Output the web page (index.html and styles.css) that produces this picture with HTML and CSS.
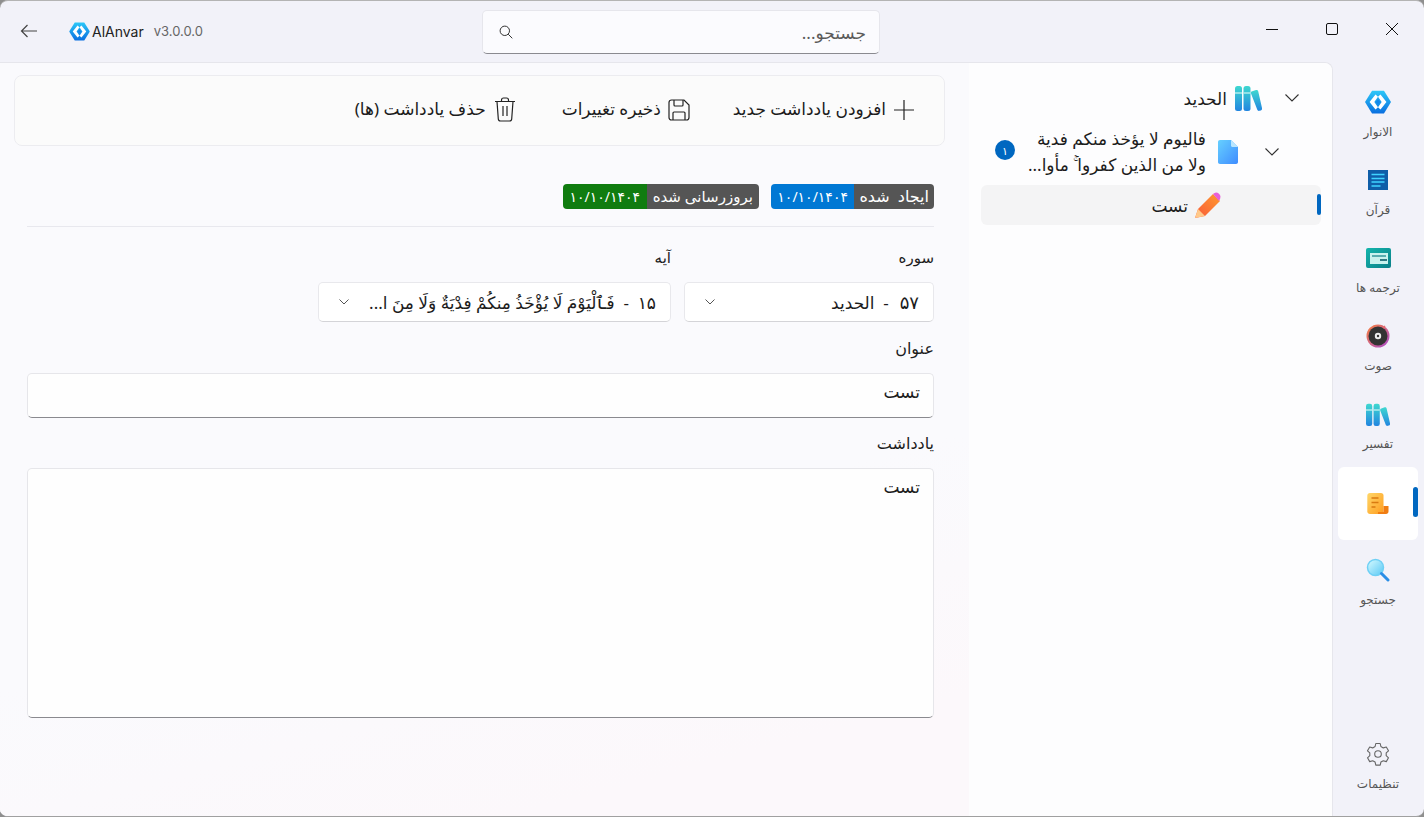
FILE: index.html
```html
<!DOCTYPE html>
<html lang="fa">
<head>
<meta charset="utf-8">
<title>AlAnvar</title>
<link rel="stylesheet" href="styles.css">
</head>
<body>
<svg class="defs" width="0" height="0" aria-hidden="true">
  <defs>
    <linearGradient id="gLogo" x1="0" y1="0" x2="0" y2="1"><stop offset="0" stop-color="#2cc8f8"/><stop offset="1" stop-color="#0a6fe0"/></linearGradient>
    <linearGradient id="gBook" x1="0" y1="0" x2="0" y2="1"><stop offset="0" stop-color="#3fd8d0"/><stop offset="1" stop-color="#2285e0"/></linearGradient>
    <linearGradient id="gDoc" x1="0" y1="0" x2="1" y2="1"><stop offset="0" stop-color="#66d0ff"/><stop offset="1" stop-color="#3f8cff"/></linearGradient>
    <linearGradient id="gPen" x1="1" y1="0" x2="0" y2="1"><stop offset="0" stop-color="#ff9a2e"/><stop offset="1" stop-color="#f8583a"/></linearGradient>
    <linearGradient id="gNote" x1="0" y1="0" x2="1" y2="1"><stop offset="0" stop-color="#ffd76a"/><stop offset="1" stop-color="#ff9d1e"/></linearGradient>
    <linearGradient id="gTrans" x1="0" y1="0" x2="1" y2="1"><stop offset="0" stop-color="#14b5ac"/><stop offset="1" stop-color="#0a7f88"/></linearGradient>
    <linearGradient id="gRing" x1="0" y1="0" x2="1" y2="1"><stop offset="0" stop-color="#f9803a"/><stop offset="1" stop-color="#a84ad0"/></linearGradient>
    <linearGradient id="gLens" x1="0" y1="0" x2="1" y2="1"><stop offset="0" stop-color="#d8fbff"/><stop offset="1" stop-color="#58c8f5"/></linearGradient>
    <symbol id="logo" viewBox="0 0 24 22">
      <path d="M6.500 0.500h11L24 11l-6.500 10.500h-11L0 11z" fill="url(#gLogo)"/>
      <path d="M9.700 4L4.200 11l5.500 7 2.300-2.200L8.600 11l3.400-4.800zM14.300 4l5.500 7-5.500 7-2.300-2.200 3.400-4.800L12 6.200z" fill="#fff"/>
      <path d="M12 8.200L14 11l-2 2.800L10 11z" fill="#1488ea"/>
    </symbol>
    <symbol id="books" viewBox="0 0 27 25">
      <rect x="0" y="0" width="7" height="25" rx="2.500" fill="url(#gBook)"/>
      <rect x="8.500" y="0" width="7" height="25" rx="2.500" fill="url(#gBook)"/>
      <path d="M16.500 5.500l4.500-1.500c1-.3 1.900.2 2.200 1.200L27 22c.3 1.100-.2 2-1.200 2.400l-1.300.4c-1 .3-2-.2-2.300-1.200L16 7.500c-.2-.8 0-1.700.5-2z" fill="url(#gBook)"/>
      <path d="M0 6h7v2H0zM8.500 6H15.500v2H8.500z" fill="#b6f0ee" opacity=".7"/>
    </symbol>
  </defs>
</svg>
<div class="window">
  <header class="titlebar">
    <div class="brand">
      <svg class="back" width="18" height="14" viewBox="0 0 18 14"><path d="M17 7H1.500M7.500 1L1.500 7l6 6" fill="none" stroke="#444" stroke-width="1.200"/></svg>
      <svg class="logo" width="21" height="19" viewBox="0 0 24 22"><use href="#logo"/></svg>
      <span class="appname">AlAnvar</span>
      <span class="version">v3.0.0.0</span>
    </div>
    <div class="search">
      <span class="search-text">جستجو...</span>
      <svg width="14" height="14" viewBox="0 0 14 14"><circle cx="5.800" cy="5.800" r="4.700" fill="none" stroke="#333" stroke-width="1"/><path d="M9.200 9.200L13.300 13.300" stroke="#333" stroke-width="1"/></svg>
    </div>
    <div class="caption">
      <span class="capbtn"><svg width="14" height="14" viewBox="0 0 14 14"><path d="M1 7.500h12" stroke="#111" stroke-width="1"/></svg></span>
      <span class="capbtn"><svg width="14" height="14" viewBox="0 0 14 14"><rect x="1.500" y="1.500" width="11" height="11" rx="1.500" fill="none" stroke="#111" stroke-width="1"/></svg></span>
      <span class="capbtn"><svg width="14" height="14" viewBox="0 0 14 14"><path d="M1 1l12 12M13 1L1 13" stroke="#111" stroke-width="1"/></svg></span>
    </div>
  </header>
  <div class="body">
    <nav class="nav">
      <a class="nav-item">
        <svg width="26" height="24" viewBox="0 0 24 22"><use href="#logo"/></svg>
        <span>الانوار</span>
      </a>
      <a class="nav-item">
        <svg width="24" height="24" viewBox="0 0 24 24"><rect x="2" y="2" width="20" height="20" fill="#0f5ea8"/><path d="M5.500 6.500h13M5.500 10.500h13M5.500 14h13M5.500 18h9" stroke="#3fd4ff" stroke-width="1.700"/></svg>
        <span>قرآن</span>
      </a>
      <a class="nav-item">
        <svg width="25" height="24" viewBox="0 0 25 24"><rect x="0" y="2" width="25" height="20" rx="2" fill="url(#gTrans)"/><rect x="4" y="7" width="18" height="11" fill="#c8f2ee"/><path d="M6 10h14" stroke="#0f7f88" stroke-width="1.200"/><path d="M14 14h7" stroke="#0a5a68" stroke-width="1.600"/></svg>
        <span>ترجمه ها</span>
      </a>
      <a class="nav-item">
        <svg width="24" height="24" viewBox="0 0 24 24"><circle cx="12" cy="12" r="11.500" fill="url(#gRing)"/><circle cx="12" cy="12" r="9.500" fill="#333"/><circle cx="12" cy="12" r="3.200" fill="#eee"/><circle cx="12" cy="12" r="1.200" fill="#333"/><path d="M17 4l2-2" stroke="#e86a6a" stroke-width="1.500"/></svg>
        <span>صوت</span>
      </a>
      <a class="nav-item">
        <svg width="24" height="24" viewBox="0 -1 27 27"><use href="#books"/></svg>
        <span>تفسیر</span>
      </a>
      <a class="nav-item nav-selected">
        <svg width="22" height="22" viewBox="0 0 22 22"><path d="M3 0h11c1.500 0 2.500 1 2.500 2.500V21H3c-1.600 0-2.700-1-2.700-2.700V2.700C.3 1 1.400 0 3 0z" fill="url(#gNote)"/><path d="M16.500 13H21.500v5.500c0 1.500-1 2.500-2.500 2.500h-8v-2h5.500z" fill="#f07d12"/><path d="M4.500 5h7M4.500 9.500h7M4.500 14h4" stroke="#d97a10" stroke-width="1.300"/></svg>
        <i class="marker marker-nav"></i>
      </a>
      <a class="nav-item">
        <svg width="24" height="24" viewBox="0 0 24 24"><circle cx="9.500" cy="9.500" r="8" fill="url(#gLens)" stroke="#6fd0f5" stroke-width="1.500"/><path d="M15.500 15.500L22 22" stroke="#2a8ee6" stroke-width="3" stroke-linecap="round"/></svg>
        <span>جستجو</span>
      </a>
      <a class="nav-item nav-bottom">
        <svg width="24" height="24" viewBox="0 0 24 24"><path d="M9.800 1.500h4.400l.7 3 2.400 1.400 3-.9 2.200 3.800-2.300 2.100v2.800l2.300 2.100-2.200 3.800-3-.9-2.400 1.400-.7 3H9.800l-.7-3-2.400-1.400-3 .9-2.200-3.800 2.300-2.100v-2.800L1.500 8.800 3.700 5l3 .9 2.400-1.400z" fill="none" stroke="#666" stroke-width="1.100" stroke-linejoin="round"/><circle cx="12" cy="12" r="3.300" fill="none" stroke="#666" stroke-width="1.100"/></svg>
        <span>تنظیمات</span>
      </a>
    </nav>
    <div class="panel">
      <aside class="tree">
        <div class="row row-surah">
          <svg class="chev" width="16" height="10" viewBox="0 0 16 10"><path d="M1.500 1.500L8 8l6.500-6.500" fill="none" stroke="#333" stroke-width="1.100"/></svg>
          <svg class="ic-books" width="27" height="25"><use href="#books"/></svg>
          <span class="row-title">الحدید</span>
        </div>
        <div class="row row-ayah">
          <svg class="chev" width="16" height="10" viewBox="0 0 16 10"><path d="M1.500 1.500L8 8l6.500-6.500" fill="none" stroke="#333" stroke-width="1.100"/></svg>
          <svg class="ic-doc" width="20" height="24" viewBox="0 0 20 24"><path d="M2 0h11l7 7v15c0 1.200-.8 2-2 2H2c-1.200 0-2-.8-2-2V2C0 .8.800 0 2 0z" fill="url(#gDoc)"/><path d="M13 0l7 7h-5.500c-.9 0-1.500-.6-1.500-1.500z" fill="#b9e6ff"/></svg>
          <span class="row-ayah-text"><span class="line">فالیوم لا یؤخذ منكم فدیة</span><span class="line">ولا من الذین كفروا ۚ مأوا...</span></span>
          <span class="count">۱</span>
        </div>
        <div class="row row-note">
          <svg class="ic-pen" width="27" height="26" viewBox="0 0 27 26"><path d="M0 26l3-9L18 2l7 7L10 24z" fill="url(#gPen)"/><path d="M0 26l3-9 7 7z" fill="#ffc98a"/><path d="M18 2c2-2 4-2 6-.2s2 4 0 7.200z" fill="#e860d8"/></svg>
          <span class="row-title">تست</span>
          <i class="marker marker-tree"></i>
        </div>
      </aside>
      <main class="main">
        <div class="toolbar">
          <button class="tool"><svg width="22" height="22" viewBox="0 0 22 22"><path d="M11 1v20M1 11h20" stroke="#222" stroke-width="1.200"/></svg><span>افزودن یادداشت جدید</span></button>
          <button class="tool"><svg width="22" height="22" viewBox="0 0 22 22"><path d="M3.500 1H16l5 5v12.500c0 1.500-1 2.500-2.500 2.500h-15C2 21 1 20 1 18.500v-15C1 2 2 1 3.500 1z" fill="none" stroke="#222" stroke-width="1.200"/><path d="M6 1v5c0 .7.400 1 1 1h7c.6 0 1-.3 1-1V1M5 21v-7c0-.7.400-1 1-1h10c.6 0 1 .3 1 1v7" fill="none" stroke="#222" stroke-width="1.200"/></svg><span>ذخیره تغییرات</span></button>
          <button class="tool tool-delete"><svg width="22" height="25" viewBox="0 0 22 25"><path d="M1 4.500h20M3 4.500l1.300 17.500c.1 1.300 1 2 2.200 2h9c1.200 0 2.100-.7 2.200-2L19 4.500M7.500 4.500V3c0-1.200.8-2 2-2h3c1.200 0 2 .8 2 2v1.500M9 9v10M13 9v10" fill="none" stroke="#222" stroke-width="1.200"/></svg><span>حذف یادداشت (ها)</span></button>
        </div>
        <div class="badges">
          <div class="badge"><span class="badge-key key-created">ایجاد شده</span><span class="badge-val val-blue">۱۰/۱۰/۱۴۰۴</span></div>
          <div class="badge"><span class="badge-key key-updated">بروزرسانی شده</span><span class="badge-val val-green">۱۰/۱۰/۱۴۰۴</span></div>
        </div>
        <hr class="divider">
        <div class="pickers">
          <div class="field field-surah">
            <label class="label label-small">سوره</label>
            <div class="combo"><span class="combo-text"><span class="combo-num">۵۷</span>&nbsp; - &nbsp;الحدید</span><svg width="10" height="6" viewBox="0 0 10 6"><path d="M.5.500L5 5 9.500.500" fill="none" stroke="#555" stroke-width="1"/></svg></div>
          </div>
          <div class="field field-ayah">
            <label class="label label-small">آیه</label>
            <div class="combo"><span class="combo-text">۱۵&nbsp; - &nbsp;فَٱلْيَوْمَ لَا يُؤْخَذُ مِنكُمْ فِدْيَةٌ وَلَا مِنَ ا...</span><svg width="10" height="6" viewBox="0 0 10 6"><path d="M.5.500L5 5 9.500.500" fill="none" stroke="#555" stroke-width="1"/></svg></div>
          </div>
        </div>
        <label class="label label-title">عنوان</label>
        <div class="input input-title">تست</div>
        <label class="label label-note">یادداشت</label>
        <div class="input input-note">تست</div>
      </main>
    </div>
  </div>
</div>
</body>
</html>
```
FILE: styles.css
```css
* { box-sizing: border-box; }
html, body { margin: 0; height: 100%; }
body {
  background: #8f8f8f;
  font-family: "Noto Sans", "DejaVu Sans", sans-serif;
  color: #1c1c1c;
  overflow: hidden;
}
.defs { position: absolute; }
.window {
  height: 817px;
  display: flex;
  flex-direction: column;
  background: #f2f2f9;
  border-radius: 8px;
  overflow: hidden;
  border-top: 1px solid #b4b4b4;
  border-bottom: 1px solid #a0a0a0;
}
.titlebar {
  height: 61px;
  flex: none;
  display: grid;
  grid-template-columns: 482px 398px 1fr;
  align-items: start;
}
.brand {
  display: flex;
  align-items: center;
  height: 60px;
  padding-left: 20px;
}
.back { margin-right: 31px; }
.logo { margin-right: 2px; }
.appname { font-family: "Inter", sans-serif; font-size: 14px; margin-right: 10px; color: #222; }
.version { font-family: "Inter", sans-serif; font-size: 13px; color: #666; }
.search {
  direction: rtl;
  height: 44px;
  margin-top: 9px;
  background: #fbfbfe;
  border: 1px solid #e6e6ec;
  border-bottom: 1px solid #8a8a90;
  border-radius: 5px;
  display: flex;
  align-items: center;
  justify-content: space-between;
  padding: 0 13px 0 16px;
  font-size: 17px;
  color: #5a5a5a;
}
.caption {
  display: flex;
  justify-content: flex-end;
  padding-right: 2px;
}
.capbtn {
  width: 60px;
  height: 56px;
  display: flex;
  align-items: center;
  justify-content: center;
}
.body {
  direction: rtl;
  flex: 1;
  display: flex;
  min-height: 0;
}
.nav {
  width: 91px;
  flex: none;
  display: flex;
  flex-direction: column;
  gap: 5px;
  padding: 15px 6px 14px 5px;
  font-size: 12px;
  color: #555;
}
.nav-item {
  position: relative;
  width: 80px;
  height: 73px;
  flex: none;
  display: flex;
  flex-direction: column;
  align-items: center;
  padding-top: 13px;
  gap: 9px;
  border-radius: 6px;
}
.nav-item span { line-height: 18px; }
.nav-selected {
  background: #fff;
  justify-content: center;
  padding-top: 0;
}
.nav-bottom { margin-top: auto; }
.marker {
  position: absolute;
  background: #0067c0;
  border-radius: 3px;
}
.marker-nav { right: 0; top: 20px; width: 5px; height: 30px; }
.marker-tree { right: 0; top: 9px; width: 4px; height: 21px; }
.panel {
  flex: 1;
  display: flex;
  background: #fafafd;
  border-radius: 0 8px 0 0;
  border-top: 1px solid #e6e6ec;
  border-right: 1px solid #e6e6ec;
  min-width: 0;
}
.tree {
  width: 363px;
  flex: none;
  background: #fdfdfe;
  padding: 15px 11px 0 12px;
  display: flex;
  flex-direction: column;
  gap: 8px;
  border-radius: 0 8px 0 0;
}
.row {
  position: relative;
  display: flex;
  align-items: center;
  border-radius: 6px;
}
.row-surah { height: 40px; padding-right: 21px; }
.row-ayah { height: 51px; padding-right: 41px; }
.row-note { height: 40px; padding-right: 99px; background: #f4f4f5; }
.row-title { font-size: 17px; }
.ic-books { margin: 0 22px 0 8px; }
.ic-doc { margin: 0 26px 0 12px; }
.ic-pen { margin-left: 7px; }
.row-ayah-text {
  width: 180px;
  font-size: 17px;
  line-height: 26px;
  white-space: nowrap;
}
.line { display: block; }
.count {
  margin: 0 11px 3px 0;
  width: 20px;
  height: 20px;
  border-radius: 50%;
  background: #0067c0;
  color: #fff;
  font-size: 11px;
  display: flex;
  align-items: center;
  justify-content: center;
}
.main {
  flex: 1;
  min-width: 0;
  padding: 12px 24px 0 14px;
  display: flex;
  flex-direction: column;
  background: linear-gradient(165deg, #fafafd 62%, #fcf8fb 88%);
}
.toolbar {
  height: 71px;
  flex: none;
  background: #fbfbfb;
  border: 1px solid #ececf0;
  border-radius: 8px;
  display: flex;
  align-items: center;
  gap: 43px;
  padding: 0 29px 2px 0;
}
.tool {
  border: 0;
  background: none;
  padding: 0;
  display: flex;
  align-items: center;
  gap: 7px;
  font-family: inherit;
  font-size: 17px;
  color: #1c1c1c;
}
.tool span { padding-bottom: 2px; }
.tool-delete { gap: 8px; margin-right: 3px; }
.badges {
  display: flex;
  gap: 12px;
  margin: 38px 11px 0 0;
}
.badge {
  display: flex;
  height: 25px;
  border-radius: 4px;
  overflow: hidden;
  font-size: 16px;
  color: #fff;
  line-height: 25px;
}
.badge-key { background: #555; padding: 0 5px; }
.key-created { word-spacing: 4px; }
.key-updated { font-size: 15px; padding: 0 6px; }
.badge-val { padding: 0 6.5px; font-size: 14px; }
.val-blue { background: #0078d4; }
.val-green { background: #107c10; }
.divider {
  margin: 17px 11px 0 13px;
  border: 0;
  border-top: 1px solid #e8e8ee;
}
.pickers {
  display: flex;
  gap: 13px;
  margin: 17px 11px 0 13px;
}
.field-surah { width: 250px; }
.field-ayah { width: 353px; }
.label {
  display: block;
  font-size: 16px;
  line-height: 26px;
  color: #1c1c1c;
}
.label-small { font-size: 15px; }
.combo {
  height: 40px;
  margin-top: 12px;
  background: #fff;
  border: 1px solid #e8e8ec;
  border-bottom-color: #d4d4d8;
  border-radius: 5px;
  display: flex;
  align-items: center;
  justify-content: space-between;
  padding: 0 14px 0 20px;
  font-size: 17px;
}
.combo-text { white-space: nowrap; }
.combo-num { font-size: 18px; margin-left: 2px; }
.label-title { margin: 13px 11px 0 13px; }
.label-note { margin: 12px 11px 0 13px; }
.input {
  margin: 12px 11px 0 13px;
  background: #fefefe;
  border: 1px solid #e6e6ea;
  border-bottom-color: #8a8a8f;
  border-radius: 5px;
  padding: 0 13px;
  font-size: 17px;
  flex: none;
}
.input-title { height: 45px; line-height: 36px; }
.input-note { height: 250px; padding-top: 6px; line-height: 24px; }
```
